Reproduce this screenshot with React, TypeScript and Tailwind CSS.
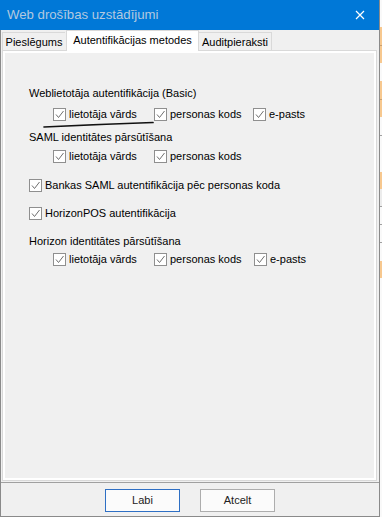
import React from "react";

function Box() {
  return (
    <span className="block w-[13px] h-[13px] shrink-0 border border-[#8f8f8f] bg-white">
      <svg width="11" height="11" viewBox="0 0 11 11" className="block">
        <path d="M2 5.5 L4.5 8.5 L9.5 2" fill="none" stroke="#6f6f6f" strokeWidth="1" />
      </svg>
    </span>
  );
}

function Check({ label, cls }: { label: string; cls?: string }) {
  return (
    <div className={"flex items-center gap-[3px] h-[13px] " + (cls ?? "")}>
      <Box />
      <span className="leading-none whitespace-nowrap">{label}</span>
    </div>
  );
}

function Heading({ text, cls }: { text: string; cls: string }) {
  return <div className={"h-[14px] flex items-center leading-none whitespace-nowrap " + cls}>{text}</div>;
}

export default function App() {
  return (
    <div className="relative flex w-[382px] h-[517px] bg-white font-['Liberation_Sans',Arial,sans-serif] text-[11px] text-black">
      <div className="w-[380px] h-full flex flex-col bg-[#f0f0f0] border-r border-[#8a8a8a]">
        <div className="h-[30px] shrink-0 bg-[#0078d7] flex items-center">
          <span className="pl-[7px] text-[13.2px] text-[#b3c9df] leading-none">Web drošības uzstādījumi</span>
          <svg width="10" height="10" viewBox="0 0 10 10" className="ml-auto mr-[14px]">
            <path d="M1 1 L9 9 M9 1 L1 9" stroke="white" strokeWidth="1.2" />
          </svg>
        </div>
        <div className="flex-1 flex flex-col border-l border-b border-[#8a8a8a]">
          <div className="h-[20px] flex items-end pl-[1px] relative z-10">
            <div className="w-[63px] h-[18px] border-t border-l border-[#d9d9d9] flex items-center justify-center leading-none pt-[1px]">
              Pieslēgums
            </div>
            <div className="w-[133px] h-[21px] -mb-px ml-px bg-white border-t border-l border-r border-[#d9d9d9] flex items-center justify-center leading-none pb-[2px]">
              Autentifikācijas metodes
            </div>
            <div className="w-[73px] h-[18px] border-t border-r border-[#d9d9d9] flex items-center justify-center leading-none pt-[1px]">
              Auditpieraksti
            </div>
          </div>
          <div className="ml-px w-[375px] h-[431px] shrink-0 border border-[#d9d9d9]">
            <div className="h-full border-2 border-white flex flex-col pl-[24px] pt-[33px]">
              <Heading text="Weblietotāja autentifikācija (Basic)" cls="" />
              <div className="flex mt-[8px] ml-[24px]">
                <Check label="lietotāja vārds" cls="w-[101px]" />
                <Check label="personas kods" cls="w-[99px]" />
                <Check label="e-pasts" />
              </div>
              <Heading text="SAML identitātes pārsūtīšana" cls="mt-[9px]" />
              <div className="flex mt-[6px] ml-[24px]">
                <Check label="lietotāja vārds" cls="w-[101px]" />
                <Check label="personas kods" />
              </div>
              <Check label="Bankas SAML autentifikācija pēc personas koda" cls="mt-[16px]" />
              <Check label="HorizonPOS autentifikācija" cls="mt-[15px]" />
              <Heading text="Horizon identitātes pārsūtīšana" cls="mt-[14px]" />
              <div className="flex mt-[5px] ml-[24px]">
                <Check label="lietotāja vārds" cls="w-[101px]" />
                <Check label="personas kods" cls="w-[100px]" />
                <Check label="e-pasts" />
              </div>
            </div>
          </div>
          <div className="mt-px h-px bg-[#a0a0a0] shrink-0" />
          <div className="flex-1 flex justify-center gap-[20px] pt-[6px]">
            <button className="w-[75px] h-[23px] border border-[#2e6fc4] bg-[#fbfbfb] text-[#222] text-[11px] leading-none">
              Labi
            </button>
            <button className="w-[75px] h-[23px] border border-[#adadad] bg-[#fbfbfb] text-[#222] text-[11px] leading-none">
              Atcelt
            </button>
          </div>
        </div>
      </div>
      <div className="flex-1 flex flex-col bg-[#f9f9f9]">
        <div className="h-[27px]" />
        <div className="h-[18px] bg-[#f7c88f]" />
        <div className="h-px bg-[#c9a070]" />
        <div className="h-[17px] bg-[#f7c88f]" />
        <div className="h-[18px]" />
        <div className="h-[18px] bg-[#f7c88f]" />
        <div className="h-px bg-[#c9a070]" />
        <div className="h-[17px] bg-[#f7c88f]" />
        <div className="h-[18px]" />
        <div className="h-px bg-[#a0a0a0]" />
        <div className="h-[36px]" />
        <div className="h-[17px] bg-[#f7c88f]" />
        <div className="h-[17px] bg-[#ececec]" />
        <div className="h-px bg-[#a0a0a0]" />
        <div className="h-[17px]" />
        <div className="h-px bg-[#a0a0a0]" />
        <div className="h-[17px]" />
        <div className="h-px bg-[#a0a0a0]" />
        <div className="h-[18px]" />
        <div className="h-[17px] bg-[#f7c88f]" />
        <div className="flex-1" />
      </div>
      <svg className="absolute left-0 top-0 pointer-events-none" width="382" height="517" viewBox="0 0 382 517">
        <path d="M44 127 Q 100 124.3 153 122.5" fill="none" stroke="#111" strokeWidth="1.7" strokeLinecap="round" />
      </svg>
    </div>
  );
}
